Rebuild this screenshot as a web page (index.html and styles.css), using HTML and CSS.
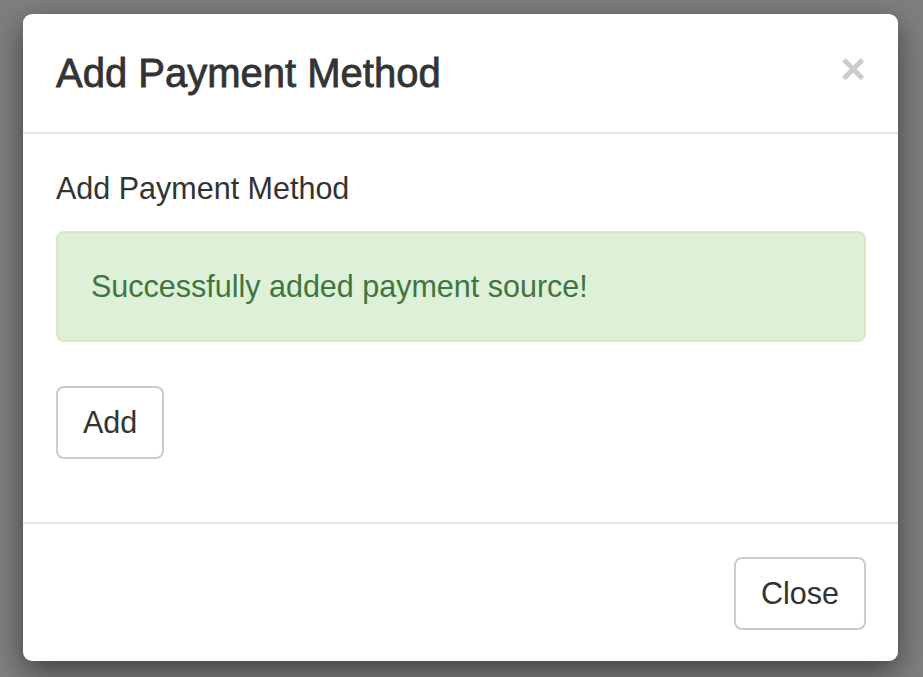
FILE: index.html
```html
<!DOCTYPE html>
<html>
<head>
<meta charset="utf-8">
<link rel="stylesheet" href="styles.css">
</head>
<body>
<div class="modal">
  <div class="modal-header">
    <h4 class="modal-title">Add Payment Method</h4>
    <button class="close" type="button">×</button>
  </div>
  <div class="modal-body">
    <p class="lead-text">Add Payment Method</p>
    <div class="alert">Successfully added payment source!</div>
    <button class="btn" type="button">Add</button>
  </div>
  <div class="modal-footer">
    <button class="btn" type="button">Close</button>
  </div>
</div>
</body>
</html>
```
FILE: styles.css
```css
html, body {
  margin: 0;
  padding: 0;
}
body {
  background: #7f7f7f;
  font-family: "Liberation Sans", Arial, sans-serif;
  color: #333;
  width: 923px;
  height: 677px;
  overflow: hidden;
}
.modal {
  margin: 14px 0 0 23px;
  width: 875px;
  height: 647px;
  background: #fff;
  border-radius: 9px;
  box-shadow: 0 10px 30px rgba(0, 0, 0, 0.5);
  display: flex;
  flex-direction: column;
  overflow: hidden;
}
.modal-header {
  height: 118px;
  padding: 0 32px 0 33px;
  border-bottom: 2px solid #e5e5e5;
  display: flex;
  align-items: center;
  justify-content: space-between;
  box-sizing: content-box;
}
.modal-title {
  margin: 0;
  font-size: 40px;
  font-weight: normal;
  -webkit-text-stroke: 0.8px #333;
  color: #333;
  line-height: 1.2;
  padding-top: 0;
}
.close {
  border: 0;
  background: none;
  padding: 0;
  font-family: "Liberation Sans", Arial, sans-serif;
  font-size: 44px;
  font-weight: bold;
  line-height: 1;
  color: #000;
  opacity: 0.2;
  margin-top: -8px;
}
.modal-body {
  padding: 33px 32px 0 33px;
  height: 355px;
  border-bottom: 2px solid #e5e5e5;
  box-sizing: content-box;
  display: flex;
  flex-direction: column;
  align-items: flex-start;
}
.lead-text {
  margin: 0 0 21px;
  font-size: 30.5px;
  line-height: 43px;
}
.alert {
  align-self: stretch;
  background: #dff0d8;
  border: 2px solid #d6e9c6;
  color: #3f7540;
  border-radius: 8px;
  padding: 32px 32px 32px 33px;
  font-size: 30.5px;
  line-height: 43px;
  margin-bottom: 44px;
}
.btn {
  font-family: "Liberation Sans", Arial, sans-serif;
  font-size: 30.5px;
  line-height: 43px;
  color: #333;
  background: #fff;
  border: 2px solid #ccc;
  border-radius: 8px;
  padding: 13px 25px;
}
.modal-footer {
  flex: 1;
  display: flex;
  justify-content: flex-end;
  align-items: flex-start;
  padding: 33px 32px 0 33px;
}
```
